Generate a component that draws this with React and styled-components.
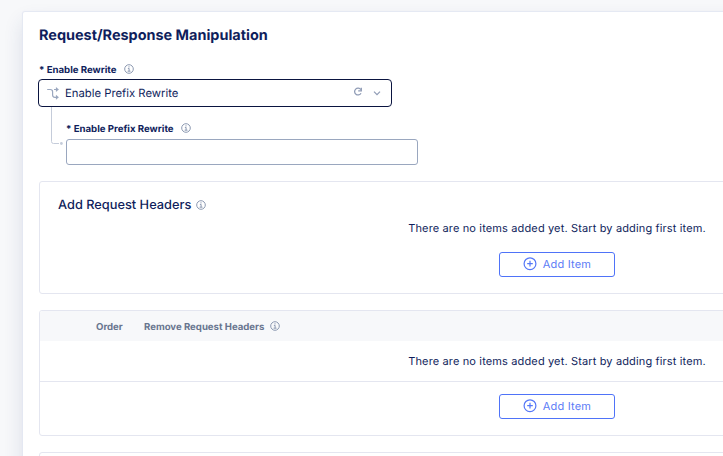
import React from 'react';
import styled, { createGlobalStyle } from 'styled-components';

const GlobalStyle = createGlobalStyle`
  * { box-sizing: border-box; }
  html, body { margin: 0; }
  body {
    height: 456px;
    overflow: hidden;
    background: #f7f8fa;
    font-family: Inter, sans-serif;
    color: #0f1e5c;
    text-rendering: geometricPrecision;
    -webkit-font-smoothing: antialiased;
  }
  svg { display: block; flex: none; }
`;

const Page = styled.main`
  height: 456px;
  padding: 12px 0 0 23px;
  overflow: hidden;
`;

const Card = styled.section`
  width: 1068px;
  height: 520px;
  padding: 13px 16px;
  background: #fff;
  border-radius: 2px 2px 0 0;
  box-shadow: 0 0 1px 1px #e4e8f2, 0 10px 20px rgba(35, 55, 110, 0.14);
`;

const Title = styled.h1`
  margin: 0;
  font-size: 14.45px;
  line-height: 22px;
  font-weight: 700;
`;

const Label = styled.label`
  display: flex;
  align-items: center;
  gap: 7.5px;
  height: 14px;
  font-size: 9.65px;
  font-weight: 700;
  white-space: nowrap;
`;

const Caption = styled.span`
  padding-top: 2px;
  line-height: 14px;
  margin-bottom: -2px;
`;

const RewriteField = styled.div`
  margin-top: 15px;
`;

const Select = styled.div`
  display: flex;
  align-items: center;
  width: 354px;
  height: 28px;
  margin: 3px 0 0 -1px;
  padding: 0 10px 0 8px;
  border: 1px solid #0a1440;
  border-radius: 4px;
  font-size: 11.3px;
`;

const SelectValue = styled.span`
  flex: 1;
  margin-left: 5px;
  line-height: 14px;
`;

const SelectActions = styled.span`
  display: flex;
  align-items: center;
  gap: 10px;
`;

const Nested = styled.div`
  display: flex;
  height: 58px;
  padding-left: 12px;
`;

const NestedField = styled.div`
  padding: 14px 0 0 1px;
`;

const TextInput = styled.input`
  display: block;
  width: 352px;
  height: 26px;
  margin-top: 4px;
  padding: 0 8px;
  border: 1px solid #9aa7bf;
  border-radius: 3px;
  outline: none;
  background: #fff;
`;

const Panel = styled.section`
  width: 1036px;
  height: ${(p) => p.$height}px;
  margin-top: 16px;
  border: 1px solid #e4e6f0;
  border-radius: 3px;
  overflow: hidden;
`;

const PanelTitle = styled.h2`
  display: flex;
  align-items: center;
  gap: 5px;
  height: 20px;
  margin: 13px 0 0 18px;
  font-size: 12.8px;
  font-weight: 500;
`;

const Message = styled.p`
  display: flex;
  align-items: center;
  justify-content: center;
  height: ${(p) => p.$height}px;
  margin: 0;
  font-size: 11px;
  letter-spacing: 0.14px;
`;

const TableHead = styled.div`
  display: flex;
  align-items: center;
  height: 30px;
  padding-left: 56px;
  background: #f7f8fa;
  color: #68758f;
  font-size: 9.6px;
  font-weight: 700;
`;

const OrderCell = styled(Caption)`
  width: 48px;
`;

const HeaderCell = styled.span`
  display: flex;
  align-items: center;
  gap: 6px;
  height: 14px;
`;

const Actions = styled.div`
  display: flex;
  justify-content: center;
  padding-top: ${(p) => p.$top}px;
  border-top: ${(p) => (p.$divided ? '1px solid #e4e6f0' : '0')};
`;

const Button = styled.button`
  display: flex;
  align-items: center;
  justify-content: center;
  gap: 6px;
  width: 116px;
  height: 25px;
  padding: 0 0 1px;
  border: 1px solid #4f73f8;
  border-radius: 3px;
  background: #fff;
  color: #5b7bf6;
  font: 400 11px Inter, sans-serif;
  letter-spacing: 0.2px;
  text-rendering: inherit;
`;

const InfoIcon = () => (
  <svg width="10" height="10" viewBox="0 0 10 10" fill="none" stroke="#8c99b1" strokeWidth="1">
    <circle cx="5" cy="5" r="4.3" />
    <path d="M3.9 4.4h1.2v2.7M3.6 7.2h2.9" />
    <circle cx="5" cy="2.8" r="0.65" fill="#8c99b1" stroke="none" />
  </svg>
);

const BranchIcon = () => (
  <svg width="13" height="13" viewBox="0 0 13 13" fill="none" stroke="#9aa7bf" strokeWidth="1.2">
    <path d="M0.2 2.5h3.1c1.6 0 2.3.8 2.3 2.2v3.4c0 1.5.7 2.2 2.2 2.2h2.4M7 2.5h3.3" />
    <path d="M9 0.2l2.8 2.3L9 4.8zM9 8l2.8 2.3L9 12.6z" fill="#9aa7bf" strokeWidth="0.2" />
  </svg>
);

const RefreshIcon = () => (
  <svg width="10" height="12" viewBox="0 0 10 12" fill="none" stroke="#8f9bb5" strokeWidth="1.3">
    <path d="M7.8 2.6A3.4 3.4 0 1 0 8 6.2" />
    <path d="M8.3 0.8v3H5.2" />
  </svg>
);

const ChevronIcon = () => (
  <svg width="8" height="8" viewBox="0 0 8 8" fill="none" stroke="#8f9bb5" strokeWidth="1.2">
    <path d="M1 2.7l3 3 3-3" />
  </svg>
);

const Connector = () => (
  <svg width="14" height="40" viewBox="0 0 14 40" fill="none" stroke="#c5ccda">
    <path d="M0.5 0v34.5q0 2 2 2h5.5" />
    <circle cx="10.4" cy="36.5" r="1.4" fill="#c5ccda" stroke="none" />
  </svg>
);

const PlusIcon = () => (
  <svg width="14" height="14" viewBox="0 0 14 14" fill="none" stroke="#5577f7" strokeWidth="1.2">
    <circle cx="7" cy="6.7" r="5.9" />
    <path d="M4.2 6.6h5.6M7 3.8v5.6" />
  </svg>
);

const AddButton = () => (
  <Button type="button">
    <PlusIcon />
    Add Item
  </Button>
);

const EMPTY = 'There are no items added yet. Start by adding first item.';

export default function App() {
  return (
    <>
      <GlobalStyle />
      <Page>
        <Card>
          <Title>Request/Response Manipulation</Title>
          <RewriteField>
            <Label><Caption>* Enable Rewrite</Caption><InfoIcon /></Label>
            <Select>
              <BranchIcon />
              <SelectValue>Enable Prefix Rewrite</SelectValue>
              <SelectActions>
                <RefreshIcon />
                <ChevronIcon />
              </SelectActions>
            </Select>
          </RewriteField>
          <Nested>
            <Connector />
            <NestedField>
              <Label><Caption>* Enable Prefix Rewrite</Caption><InfoIcon /></Label>
              <TextInput aria-label="Enable Prefix Rewrite" />
            </NestedField>
          </Nested>
          <Panel $height={113}>
            <PanelTitle>Add Request Headers <InfoIcon /></PanelTitle>
            <Message $height={26}>{EMPTY}</Message>
            <Actions $top={11}><AddButton /></Actions>
          </Panel>
          <Panel $height={126}>
            <TableHead>
              <OrderCell>Order</OrderCell>
              <HeaderCell><Caption>Remove Request Headers</Caption><InfoIcon /></HeaderCell>
            </TableHead>
            <Message $height={40}>{EMPTY}</Message>
            <Actions $top={12} $divided><AddButton /></Actions>
          </Panel>
          <Panel $height={113} />
        </Card>
      </Page>
    </>
  );
}
